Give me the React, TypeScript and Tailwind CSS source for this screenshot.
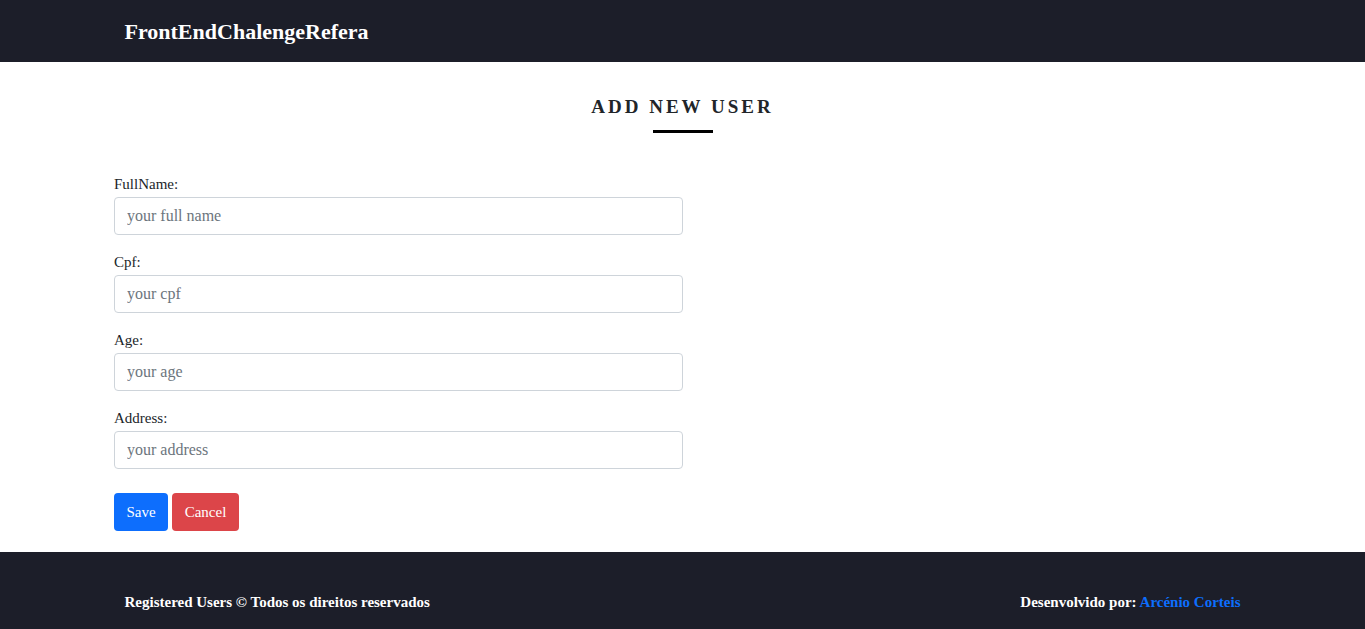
import React from 'react';

const FIELDS: [string, string][] = [
  ['FullName:', 'your full name'],
  ['Cpf:', 'your cpf'],
  ['Age:', 'your age'],
  ['Address:', 'your address'],
];

const App: React.FC = () => {
  return (
    <div className="min-h-screen flex flex-col bg-white font-['Liberation_Serif',serif] text-[#212529]">
      {/* Navbar */}
      <header className="h-[62px] bg-[#1c1e29] flex items-center">
        <div className="w-[1140px] mx-auto px-3">
          <span className="text-white font-bold text-[22px]">FrontEndChalengeRefera</span>
        </div>
      </header>

      {/* Form */}
      <main className="h-[490px] pt-[35px] w-[1161px] mx-auto px-3">
        <div className="flex flex-col items-center mb-[41px]">
          <h2 className="font-bold text-[19px] tracking-[3px] leading-none">ADD NEW USER</h2>
          <div className="mt-[14px] w-[60px] h-[3px] bg-black" />
        </div>
        <form className="w-[569px]">
          {FIELDS.map(([label, ph]) => (
            <div key={label} className="mb-[17px]">
              <label className="block text-[15px] leading-[20px] mb-[3px]">{label}</label>
              <input
                placeholder={ph}
                className="w-full h-[38px] px-3 text-[16px] border border-[#ced4da] rounded-[4px] placeholder:text-[#6c757d] outline-none"
              />
            </div>
          ))}
          <div className="flex gap-[4px] mt-[24px]">
            <button type="button" className="h-[38px] w-[54px] bg-[#0d6efd] text-white text-[15px] rounded-[4px]">
              Save
            </button>
            <button type="button" className="h-[38px] w-[67px] bg-[#dc4549] text-white text-[15px] rounded-[4px]">
              Cancel
            </button>
          </div>
        </form>
      </main>

      {/* Footer */}
      <footer className="h-[77px] bg-[#1c1e29] flex items-center pt-[24px]">
        <div className="w-[1140px] mx-auto px-3 flex justify-between text-white font-bold text-[15px]">
          <span>Registered Users © Todos os direitos reservados</span>
          <span>
            Desenvolvido por: <a className="text-[#0d6efd]">Arcénio Corteis</a>
          </span>
        </div>
      </footer>
    </div>
  );
};

export default App;
